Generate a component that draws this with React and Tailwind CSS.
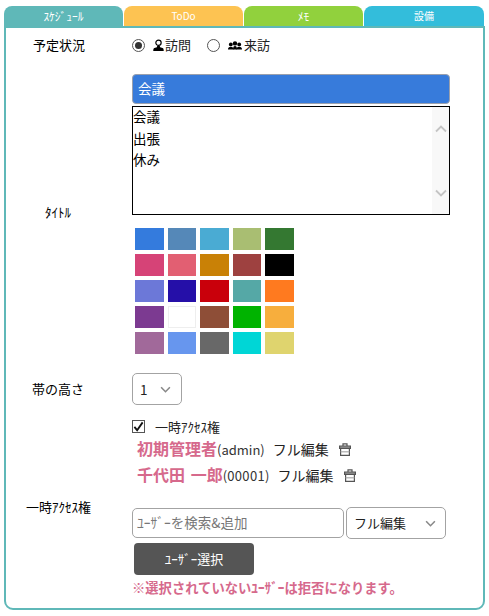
const jp = "font-['Meiryo','Noto_Sans_CJK_JP','Noto_Sans',sans-serif]";

const tabs = [
  { name: "ｽｹｼﾞｭｰﾙ", color: "bg-[#5fb8b8]", width: "w-[119px]", size: "text-[11.500px]" },
  { name: "ToDo", color: "bg-[#fdc352]", width: "w-[119px]", size: "text-[10px]" },
  { name: "ﾒﾓ", color: "bg-[#91d13d]", width: "w-[119px]", size: "text-[11.500px]" },
  { name: "設備", color: "bg-[#33bddb]", width: "w-[120px]", size: "text-[10px]" },
];

const swatches = [
  ["#347bdd", "#5588b8", "#4aabd3", "#a9be72", "#347831"],
  ["#d64377", "#e25f72", "#c98106", "#9e4140", "#000000"],
  ["#6c78d8", "#250fa8", "#c9000b", "#55a8a6", "#ff7a1f"],
  ["#7c3a91", "#ffffff", "#8e4e37", "#00b300", "#f7ae3d"],
  ["#a1699a", "#6796ee", "#686868", "#00d6d6", "#dfd46e"],
];

const people = [
  { name: "初期管理者", id: "(admin)", idClass: "" },
  { name: "千代田 一郎", id: "(00001)", idClass: "tracking-[0.3px]" },
];

function Chevron({ className }) {
  return (
    <svg viewBox="0 0 12 8" className={className} fill="none" stroke="currentColor" strokeWidth="1.8">
      <path d="M1 1.500 6 6.500 11 1.500" />
    </svg>
  );
}

function PersonIcon() {
  return (
    <svg viewBox="0 0 12 14" className="block w-[11px] h-[13px] text-black">
      <circle cx="6" cy="4" r="2.900" fill="none" stroke="currentColor" strokeWidth="1.300" />
      <path d="M4.600 7.500h2.800l.4 1.500 2.600.8c1 .4 1.300 1.300 1.300 3.200H.3c0-1.900.3-2.800 1.300-3.200l2.600-.8z" fill="currentColor" />
    </svg>
  );
}

function GroupIcon() {
  return (
    <svg viewBox="0 0 14 9" className="block w-[14px] h-[9px] text-black" fill="currentColor">
      <circle cx="2.800" cy="3.400" r="1.900" />
      <circle cx="11.200" cy="3.400" r="1.900" />
      <circle cx="7" cy="2.400" r="2.200" />
      <path d="M0 8.500c0-2 1-2.800 2.800-2.800s2.800.8 2.800 2.800zM8.400 8.500c0-2 1-2.800 2.800-2.800s2.800.8 2.800 2.800z" />
      <path d="M5 8.500c0-2.400.7-3.500 2-3.500s2 1.100 2 3.500z" />
    </svg>
  );
}

function TrashIcon() {
  return (
    <svg viewBox="0 0 12 13" className="block w-[12px] h-[13px] text-[#555]" fill="none" stroke="currentColor" strokeWidth="1.200">
      <path d="M4 3V.8h4V3" />
      <path d="M.6 3h10.800v2.400H.6z" fill="#999" />
      <path d="M1.600 5.400v7h8.800v-7" />
      <path d="M1.600 8.800h8.800" stroke="#aaa" />
    </svg>
  );
}

function Radio({ checked }) {
  return (
    <span className="block w-[13px] h-[13px] rounded-full border border-[#555] bg-white">
      {checked && <span className="block w-[7px] h-[7px] m-[2px] rounded-full bg-[#333]" />}
    </span>
  );
}

function Label({ className, children }) {
  return <div className={`w-[126px] shrink-0 text-black ${className}`}>{children}</div>;
}

export default function App() {
  return (
    <div className={`w-[489px] h-[616px] bg-white pt-[6px] px-[4px] ${jp}`}>
      <div className="flex gap-[1px] w-[481px] h-[20px]">
        {tabs.map((tab) => (
          <div
            key={tab.name}
            className={`${tab.width} ${tab.color} ${tab.size} rounded-t-[8px] text-white leading-[20px] text-center`}
          >
            {tab.name}
          </div>
        ))}
      </div>

      <div className="w-[481px] h-[584px] border-2 border-[#5fb8b8] rounded-b-[9px] bg-white pt-[8px]">
        <div className="flex items-center h-[18px] text-[13px] leading-[18px]">
          <Label className="pl-[27px]">予定状況</Label>
          <Radio checked />
          <span className="ml-[8px]">
            <PersonIcon />
          </span>
          <span className="ml-[1px] text-[#222]">訪問</span>
          <span className="ml-[16px]">
            <Radio />
          </span>
          <span className="ml-[8px]">
            <GroupIcon />
          </span>
          <span className="ml-[2px] text-[#222]">来訪</span>
        </div>

        <div className="flex mt-[20px]">
          <Label className="self-end text-[13px] leading-[16px] pl-[39px] mb-[-5px]">ﾀｲﾄﾙ</Label>
          <div className="w-[318px]">
            <div className="h-[30px] bg-[#377bdb] border border-[#9aa0ad] rounded-[4px] text-white text-[13.500px] leading-[26px] pl-[5px]">
              会議
            </div>
            <div className="mt-[2px] h-[109px] border border-black flex text-[13.500px] leading-[21.500px] text-black">
              <div className="flex-1 -mt-[1px]">
                <div>会議</div>
                <div>出張</div>
                <div>休み</div>
              </div>
              <div className="w-[17px] bg-[#f8f8f8] flex flex-col items-center justify-between pt-[18px] pb-[17px] text-[#c4c4c4]">
                <Chevron className="w-[12px] h-[8px] rotate-180" />
                <Chevron className="w-[12px] h-[8px]" />
              </div>
            </div>
          </div>
        </div>

        <div className="ml-[129px] mt-[13px] w-[159px] grid grid-cols-5 gap-x-[4px] gap-y-[4px]">
          {swatches.flat().map((color, i) => (
            <div
              key={i}
              className={`h-[22px] ${color === "#ffffff" ? "border border-[#eeeeee]" : ""}`}
              style={{ backgroundColor: color }}
            />
          ))}
        </div>

        <div className="flex items-center mt-[19px] h-[32px] text-[13.500px]">
          <Label className="pl-[26px] text-[13px]">帯の高さ</Label>
          <div className="w-[50px] h-[32px] border border-[#a3a3a3] rounded-[5px] flex items-center justify-between pl-[7px] pr-[10px] text-[#222]">
            <span>1</span>
            <Chevron className="w-[11px] h-[7px] text-[#888]" />
          </div>
        </div>

        <div className="ml-[126px] mt-[15px] flex items-center h-[13px] text-[13px] text-[#222]">
          <span className="w-[13px] h-[13px] border border-[#555] bg-white flex items-center justify-center">
            <svg viewBox="0 0 12 12" className="w-[11px] h-[11px]" fill="none" stroke="#111" strokeWidth="2">
              <path d="M1.500 6.500 4.500 10 10.500 1.500" />
            </svg>
          </span>
          <span className="ml-[10px]">一時ｱｸｾｽ権</span>
        </div>

        {people.map((person, i) => (
          <div
            key={person.id}
            className={`ml-[131px] flex items-baseline h-[20px] leading-[20px] ${i === 0 ? "mt-[5px]" : "mt-[6px]"}`}
          >
            <span className="text-[16px] font-bold text-[#d6698c] [word-spacing:2px]">{person.name}</span>
            <span className={`text-[13px] text-[#333] ${person.idClass}`}>{person.id}</span>
            <span className="ml-[8px] text-[14px] text-[#222]">フル編集</span>
            <span className="ml-[10px] self-center mt-[2px]">
              <TrashIcon />
            </span>
          </div>
        ))}

        <div className="flex mt-[14px]">
          <Label className="text-[13px] leading-[16px] pl-[20px] pt-[1px]">一時ｱｸｾｽ権</Label>
          <div className="pt-[9px]">
            <div className="flex items-center gap-[2px]">
              <div className="w-[212px] h-[30px] border border-[#a3a3a3] rounded-[5px] text-[#777] text-[13.500px] leading-[26px] pl-[4px]">
                ﾕｰｻﾞｰを検索&追加
              </div>
              <div className="w-[100px] h-[32px] border border-[#a3a3a3] rounded-[5px] flex items-center justify-between pl-[7px] pr-[9px] text-[13px] text-[#222]">
                <span>フル編集</span>
                <Chevron className="w-[11px] h-[7px] text-[#888]" />
              </div>
            </div>
            <button className="ml-[2px] mt-[4px] w-[120px] h-[32px] bg-[#555555] rounded-[4px] text-white text-[13px] block">
              ﾕｰｻﾞｰ選択
            </button>
            <div className="mt-[4px] text-[13.300px] leading-[18px] font-bold text-[#d6698c] whitespace-nowrap">
              ※選択されていないﾕｰｻﾞｰは拒否になります。
            </div>
          </div>
        </div>
      </div>
    </div>
  );
}
